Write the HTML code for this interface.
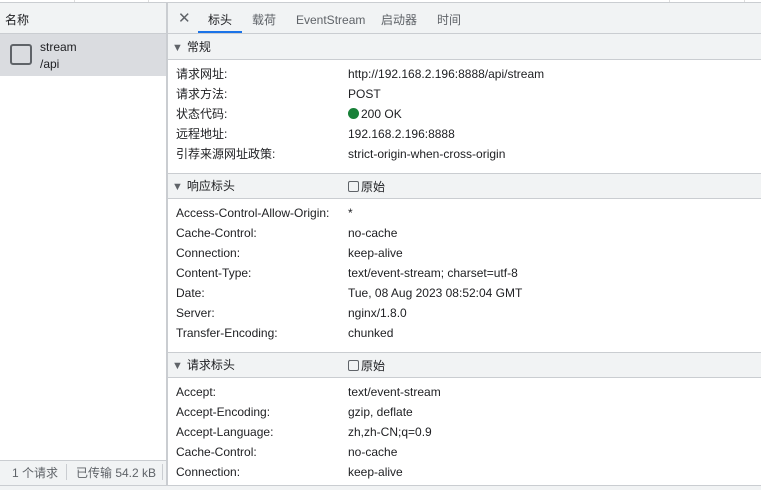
<!DOCTYPE html>
<html><head><meta charset="utf-8"><style>
*{margin:0;padding:0;box-sizing:border-box}
body{width:761px;height:490px;overflow:hidden;background:#fff;font-family:"Liberation Sans","Noto Sans CJK SC",sans-serif;font-size:12px;color:#202124;position:relative}
.a{position:absolute;white-space:nowrap}
.g{background:#f1f3f4}
.hd{position:absolute;left:168px;right:0;height:26px;background:#f1f3f4;border-top:1px solid #cacdd1;border-bottom:1px solid #cacdd1}
.cb{display:inline-block;width:11px;height:11px;border:1px solid #5f6368;border-radius:2px;vertical-align:-1px;margin-right:2px}
.tri{font-size:11px;color:#5f6368;margin-right:4px}
</style></head><body>
<div class="a" style="left:0;top:0;width:761px;height:3px;border-bottom:1px solid #cacdd1"></div>
<div class="a" style="left:74px;top:0;width:1px;height:2px;background:#ddd"></div>
<div class="a" style="left:148px;top:0;width:1px;height:2px;background:#ddd"></div>
<div class="a" style="left:669px;top:0;width:1px;height:2px;background:#ddd"></div>
<div class="a" style="left:744px;top:0;width:1px;height:2px;background:#ddd"></div>
<!-- left -->
<div class="a g" style="left:0;top:3px;width:166px;height:31px;border-bottom:1px solid #cacdd1"></div>
<div class="a" style="left:5px;top:11px">名称</div>
<div class="a" style="left:0;top:34px;width:166px;height:42px;background:#dadce0"></div>
<div class="a" style="left:10px;top:44px;width:22px;height:21px;border:2px solid #5f6368;border-radius:3px"></div>
<div class="a" style="left:40px;top:40px">stream</div>
<div class="a" style="left:40px;top:57px">/api</div>
<div class="a g" style="left:0;top:460px;width:166px;height:25px;border-top:1px solid #cacdd1"></div>
<div class="a" style="left:12px;top:464px;color:#5f6368">1 个请求</div>
<div class="a" style="left:66px;top:464px;width:1px;height:16px;background:#cacdd1"></div>
<div class="a" style="left:76px;top:464px;color:#5f6368">已传输 54.2 kB</div>
<div class="a" style="left:162px;top:464px;width:1px;height:16px;background:#cacdd1"></div>
<div class="a" style="left:166px;top:3px;width:2px;height:482px;background:#cacdd1"></div>
<div class="a" style="left:0;top:485px;width:761px;height:5px;background:#f1f3f4;border-top:1px solid #cacdd1"></div>
<!-- tabs -->
<div class="a g" style="left:168px;top:3px;right:0;height:31px;border-bottom:1px solid #cacdd1"></div>
<div class="a" style="left:178px;top:9px;font-size:15px;color:#5f6368">✕</div>
<div class="a" style="left:208px;top:11px">标头</div>
<div class="a" style="left:198px;top:31px;width:44px;height:2px;background:#1a73e8"></div>
<div class="a" style="left:252px;top:11px;color:#5f6368">载荷</div>
<div class="a" style="left:296px;top:13px;color:#5f6368">EventStream</div>
<div class="a" style="left:381px;top:11px;color:#5f6368">启动器</div>
<div class="a" style="left:437px;top:11px;color:#5f6368">时间</div>
<!-- general -->
<div class="hd" style="top:34px;border-top:none"></div>
<div class="a" style="left:172px;top:38px"><span class="tri">▼</span>常规</div>
<div class="a" style="left:176px;top:64px;line-height:20px">请求网址:<br>请求方法:<br>状态代码:<br>远程地址:<br>引荐来源网址政策:</div>
<div class="a" style="left:348px;top:64px;line-height:20px">http://192.168.2.196:8888/api/stream<br>POST<br><span style="display:inline-block;width:11px;height:11px;border-radius:50%;background:#188038;vertical-align:-1px;margin-right:2px"></span>200 OK<br>192.168.2.196:8888<br>strict-origin-when-cross-origin</div>
<!-- response -->
<div class="hd" style="top:173px"></div>
<div class="a" style="left:172px;top:177px"><span class="tri">▼</span>响应标头</div>
<div class="a" style="left:348px;top:178px"><span class="cb"></span>原始</div>
<div class="a" style="left:176px;top:203px;line-height:20px">Access-Control-Allow-Origin:<br>Cache-Control:<br>Connection:<br>Content-Type:<br>Date:<br>Server:<br>Transfer-Encoding:</div>
<div class="a" style="left:348px;top:203px;line-height:20px">*<br>no-cache<br>keep-alive<br>text/event-stream; charset=utf-8<br>Tue, 08 Aug 2023 08:52:04 GMT<br>nginx/1.8.0<br>chunked</div>
<!-- request -->
<div class="hd" style="top:352px"></div>
<div class="a" style="left:172px;top:356px"><span class="tri">▼</span>请求标头</div>
<div class="a" style="left:348px;top:357px"><span class="cb"></span>原始</div>
<div class="a" style="left:176px;top:382px;line-height:20px">Accept:<br>Accept-Encoding:<br>Accept-Language:<br>Cache-Control:<br>Connection:</div>
<div class="a" style="left:348px;top:382px;line-height:20px">text/event-stream<br>gzip, deflate<br>zh,zh-CN;q=0.9<br>no-cache<br>keep-alive</div>
</body></html>
